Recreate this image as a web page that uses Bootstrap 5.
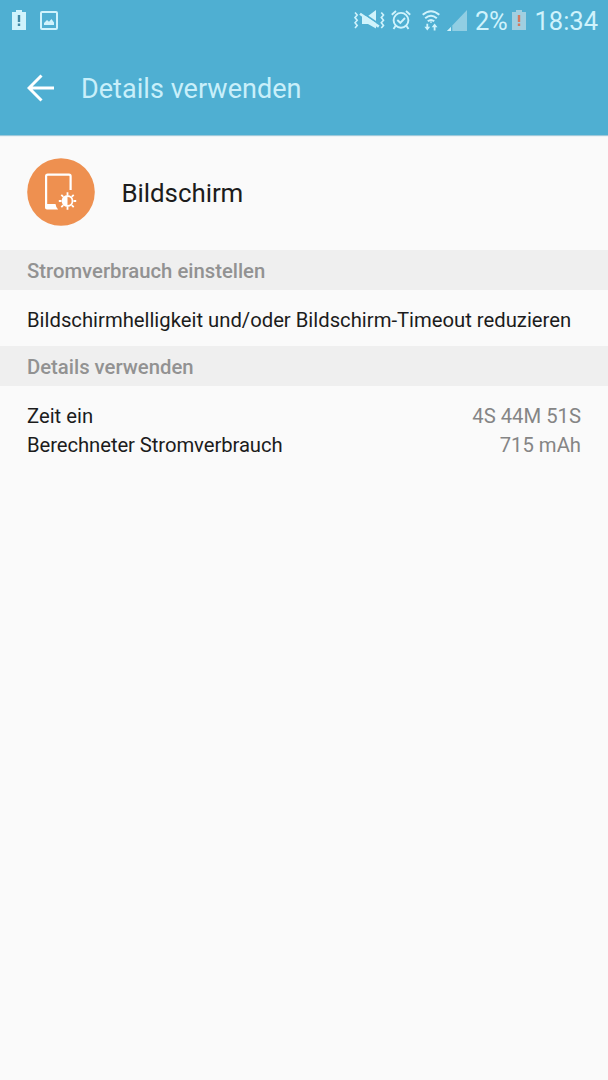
<!DOCTYPE html>
<html lang="de">
<head>
<meta charset="utf-8">
<meta name="viewport" content="width=device-width, initial-scale=1">
<title>Details verwenden</title>
<link href="https://cdn.jsdelivr.net/npm/bootstrap@5.3.0/dist/css/bootstrap.min.css" rel="stylesheet">
<style>
body{font-family:Roboto,"Liberation Sans",sans-serif;background:#fafafa;color:#1c1c1c;font-size:20.25px;line-height:29px;min-height:100vh}
svg{display:block;flex:none}
.top{background:#4fafd2;height:135px;box-shadow:0 1px 1px #9fc9da}
.status{height:40px;padding-left:12px;padding-right:10px;color:#d0f3fc}
.status span{font-size:25.5px;line-height:40px;white-space:nowrap;padding-top:1px}
.ic-picture{margin-left:14px}
.ic-alarm{margin-left:6px}
.ic-wifi{margin-left:11px}
.ic-signal{margin-left:7px}
.pct{margin-left:8px;letter-spacing:-.3px}
.ic-battery{margin-left:5px}
.clock{margin-left:8px}
.appbar{height:95px;padding-left:27px;color:#c9effa}
.appbar h1{font-size:27px;line-height:32px;font-weight:400;margin-left:27px;padding-top:3px;letter-spacing:.04px}
.app-row{height:114px;padding-left:27px}
.app-row h2{font-size:25.9px;line-height:32px;font-weight:400;margin-left:26.5px;padding-top:2px;letter-spacing:-.05px}
.section-head{height:40px;line-height:42px;background:#efefef;color:#929292;font-size:20.3px;font-weight:500;padding:0 27px}
.first-head{margin-top:1px}
.tip{height:56px;line-height:60px;padding:0 27px;white-space:nowrap}
.facts{padding:16px 27px}
.wide-label{letter-spacing:-.07px}
.value{color:#858585}
</style>
</head>
<body>
<header class="top">
  <div class="status d-flex align-items-center">
    <svg width="14" height="20" viewBox="0 0 14 20"><path fill="currentColor" d="M4 0h6v2h4v18H0V2h4z"/><path fill="#4289a5" d="M5.8 5h2.4v7H5.8zM5.8 13.5h2.4V16H5.8z"/></svg>
    <svg class="ic-picture" width="18" height="19" viewBox="0 0 18 19" fill="none"><rect x="1" y="1" width="16" height="17" rx="1" stroke="currentColor" stroke-width="2"/><path fill="currentColor" d="M4 14v-2l3-3 2 1.7L11.5 8l2.5 3.5V14z"/></svg>
    <svg class="ms-auto" width="31" height="20" viewBox="0 0 31 20" fill="none" stroke="currentColor"><path stroke-width="1.6" d="M1 2.5l2.2 2.6L1 7.6l2.2 2.6L1 12.8l2.2 2.6L1 18M27.3 2.5l2.2 2.6-2.2 2.5 2.2 2.6-2.2 2.6 2.2 2.6-2.2 2.6"/><path fill="currentColor" stroke="none" d="M8 6h6L22 0v18.5L14 14H8z"/><path stroke="#4fafd2" stroke-width="1.8" d="M6.5 1.5L26 14.7"/><path stroke-width="2.6" d="M6 3.8L24.8 16.6"/></svg>
    <svg class="ic-alarm" width="20" height="20" viewBox="0 0 20 20" fill="none" stroke="currentColor" stroke-width="1.9"><circle cx="10" cy="10.3" r="7.4"/><path d="M.8 4.8L5 1M15 1l4.2 3.8M4.5 16l-2 3M15.5 16l2 3M6.3 10l3 2.8L14 8"/></svg>
    <svg class="ic-wifi" width="18" height="21" viewBox="0 0 18 21" fill="none" stroke="currentColor" stroke-width="2"><path d="M.7 4.8q8.3-7.2 16.6 0M3.2 8.2q5.8-5 11.6 0M5.8 11.3q3.2-2.7 6.4 0"/><path fill="currentColor" stroke="none" d="M7.5 11.5h3L9 13.3zM4.4 13.8h1.8v3h2L5.3 20.5l-2.9-3.7h2zM12.6 13.5l2.9 3.7h-2v3.2h-1.8v-3.2h-2z"/></svg>
    <svg class="ic-signal" width="20" height="21" viewBox="0 0 20 21"><path fill="#91cee3" d="M20 0v21H0z"/><path fill="#4fafd2" d="M4 16.8L5.3 15.5V21H4z"/><path fill="currentColor" d="M4 17v4H0z"/></svg>
    <span class="pct">2%</span>
    <svg class="ic-battery" width="14" height="20" viewBox="0 0 14 20"><path fill="#a1cfe0" d="M4 0h6v2h4v18H0V2h4z"/><path fill="#d4795f" d="M5.8 5h2.4v7H5.8zM5.8 13.5h2.4V16H5.8z"/></svg>
    <span class="clock">18:34</span>
  </div>
  <div class="appbar d-flex align-items-center">
    <svg width="27" height="28" viewBox="0 0 27 28" fill="none" stroke="#fff" stroke-width="3"><path d="M14.5 1.5L2 14l12.5 12.5M2.5 14H27"/></svg>
    <h1 class="mb-0">Details verwenden</h1>
  </div>
</header>
<main>
  <div class="app-row d-flex align-items-center">
    <svg width="68" height="68" viewBox="0 0 68 68" fill="none"><circle cx="34" cy="34" r="33.8" fill="#ee9050"/><path stroke="#fff" stroke-width="2.2" d="M43.6 32V18.2q0-1.6-1.6-1.6H20.7q-1.6 0-1.6 1.6V48"/><path fill="#fff" d="M18 46h10.5q.5 3.5 2.6 5.6H20q-2 0-2-1.8z"/><g transform="translate(40.5 43)"><circle r="5" stroke="#fff" stroke-width="1.8"/><path fill="#fff" d="M0-5A5 5 0 0 0 0 5z"/><path stroke="#fff" stroke-width="1.8" d="M0-6V-8.7M0 6V8.7M6 0H8.7M-6 0H-8.7M4.2-4.2l2-2M-4.2 4.2l-2 2M4.2 4.2l2 2M-4.2-4.2l-2-2"/></g></svg>
    <h2 class="mb-0">Bildschirm</h2>
  </div>
  <h3 class="section-head first-head mb-0">Stromverbrauch einstellen</h3>
  <div class="tip">Bildschirmhelligkeit und/oder Bildschirm-Timeout reduzieren</div>
  <h3 class="section-head mb-0">Details verwenden</h3>
  <div class="facts">
    <div class="d-flex justify-content-between"><span>Zeit ein</span><span class="value">4S 44M 51S</span></div>
    <div class="d-flex justify-content-between"><span class="wide-label">Berechneter Stromverbrauch</span><span class="value">715 mAh</span></div>
  </div>
</main>
<script src="https://cdn.jsdelivr.net/npm/bootstrap@5.3.0/dist/js/bootstrap.bundle.min.js"></script>
</body>
</html>
